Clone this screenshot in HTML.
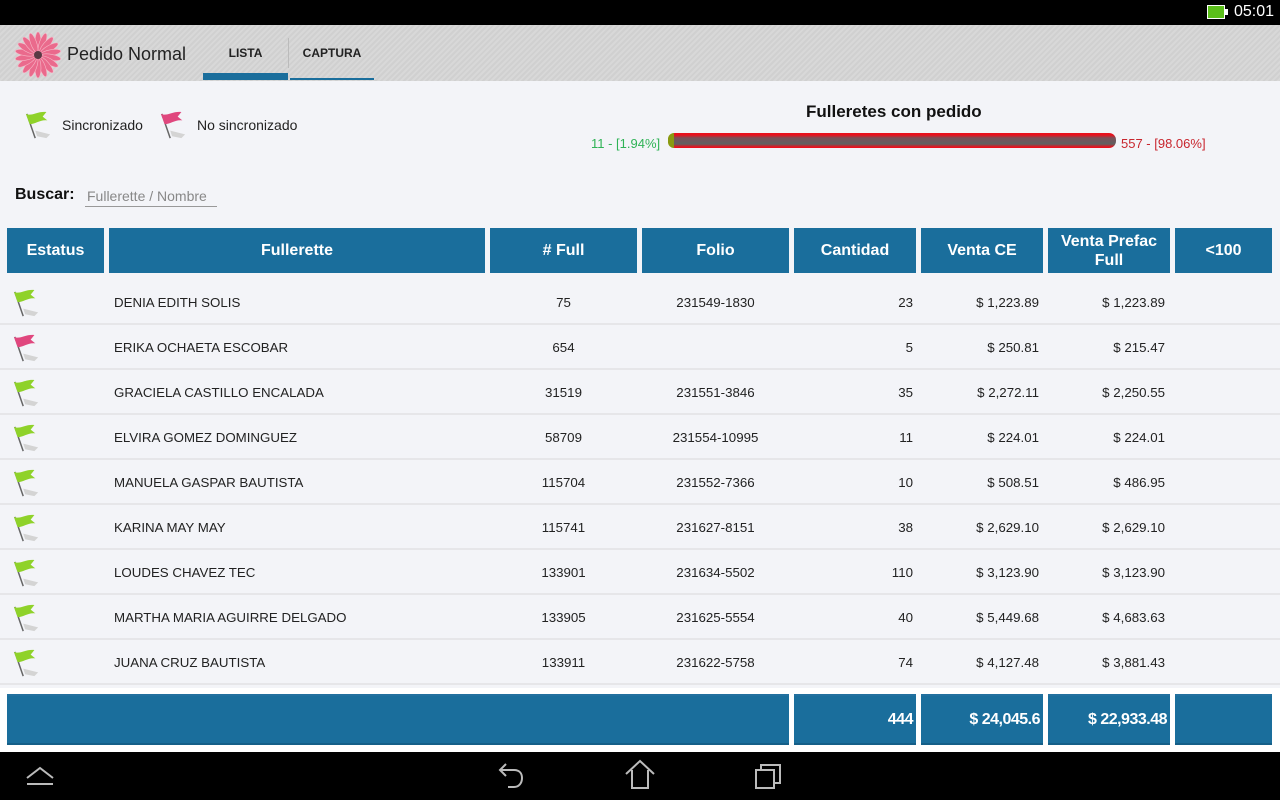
<!DOCTYPE html>
<html><head><meta charset="utf-8"><style>
*{margin:0;padding:0;box-sizing:border-box}
body{width:1280px;height:800px;overflow:hidden;background:#f3f4f8;font-family:"Liberation Sans",sans-serif;position:relative;color:#222}
.a{position:absolute}
#sb{left:0;top:0;width:1280px;height:25px;background:#000}
#ab{left:0;top:25px;width:1280px;height:56px;background:repeating-linear-gradient(135deg,#d0d0d0 0 2px,#d8d8d8 2px 4px)}
.h{position:absolute;top:228px;height:45px;background:#1a6e9c;color:#fff;font-weight:bold;font-size:16px;display:flex;align-items:center;justify-content:center;text-align:center;line-height:19px}
.f{position:absolute;top:694px;height:51px;background:#1a6e9c;color:#fff;font-weight:bold;font-size:16px;letter-spacing:-.5px;display:flex;align-items:center;justify-content:flex-end;padding-right:3px;border-top:2px solid #22709f;border-bottom:2px solid #155f88}
.r{position:absolute;left:0;width:1280px;height:45px;font-size:13.3px;border-bottom:2px solid #e6e6e9}
.r span{position:absolute;top:15px}
.c{text-align:center}.rt{text-align:right}
#nb{left:0;top:752px;width:1280px;height:48px;background:#000}
</style></head><body>
<div id="sb" class="a">
 <div class="a" style="left:1207px;top:5px;width:18px;height:14px;border:1.5px solid #fff;background:#5bbf1a"></div>
 <div class="a" style="left:1225px;top:9px;width:3px;height:6px;background:#fff"></div>
 <div class="a" style="left:1234px;top:3px;color:#fff;font-size:16px">05:01</div>
</div>
<div id="ab" class="a">
 <svg class="a" style="left:14px;top:6px" width="48" height="48" viewBox="-24 -24 48 48">
  <g fill="#ea6a8c" stroke="#f6b8c8" stroke-width=".6">
   <g id="pt"><ellipse cx="0" cy="-13" rx="3" ry="10"/></g>
   <use href="#pt" transform="rotate(20)"/><use href="#pt" transform="rotate(40)"/><use href="#pt" transform="rotate(60)"/><use href="#pt" transform="rotate(80)"/><use href="#pt" transform="rotate(100)"/><use href="#pt" transform="rotate(120)"/><use href="#pt" transform="rotate(140)"/><use href="#pt" transform="rotate(160)"/><use href="#pt" transform="rotate(180)"/><use href="#pt" transform="rotate(200)"/><use href="#pt" transform="rotate(220)"/><use href="#pt" transform="rotate(240)"/><use href="#pt" transform="rotate(260)"/><use href="#pt" transform="rotate(280)"/><use href="#pt" transform="rotate(300)"/><use href="#pt" transform="rotate(320)"/><use href="#pt" transform="rotate(340)"/>
  </g>
  <circle r="4" fill="#5a3a44"/>
 </svg>
 <div class="a" style="left:67px;top:19px;font-size:18px;color:#222">Pedido Normal</div>
 <div class="a" style="left:203px;top:21px;width:85px;text-align:center;font-size:12px;font-weight:bold;color:#222">LISTA</div>
 <div class="a" style="left:203px;top:48px;width:85px;height:7px;background:#1a6e9c"></div>
 <div class="a" style="left:288px;top:13px;width:1px;height:30px;background:#bbb"></div>
 <div class="a" style="left:290px;top:21px;width:84px;text-align:center;font-size:12px;font-weight:bold;color:#222">CAPTURA</div>
 <div class="a" style="left:290px;top:53px;width:84px;height:2px;background:#1a6e9c"></div>
</div>

<svg width="0" height="0" style="position:absolute"><defs>
<symbol id="fg" viewBox="0 0 30 34"><path d="M12 22 L28 26 L24 30 L14 28 Z" fill="#d4d4d4"/><path d="M3 4 L12 30" stroke="#666" stroke-width="1.6"/><path d="M2 4 C9 7 14 1 24 2 L20 7 L25 11 C17 10 13 15 6 15 Z" fill="#8fd22a"/></symbol>
<symbol id="fp" viewBox="0 0 30 34"><path d="M12 22 L28 26 L24 30 L14 28 Z" fill="#d4d4d4"/><path d="M3 4 L12 30" stroke="#666" stroke-width="1.6"/><path d="M2 4 C9 7 14 1 24 2 L20 7 L25 11 C17 10 13 15 6 15 Z" fill="#e0477e"/></symbol>
</defs></svg>

<svg class="a" style="left:24px;top:110px" width="28" height="32"><use href="#fg"/></svg>
<div class="a" style="left:62px;top:117px;font-size:14px">Sincronizado</div>
<svg class="a" style="left:159px;top:110px" width="28" height="32"><use href="#fp"/></svg>
<div class="a" style="left:197px;top:117px;font-size:14px">No sincronizado</div>

<div class="a" style="left:806px;top:102px;font-size:17px;font-weight:bold;color:#111">Fulleretes con pedido</div>
<div class="a" style="left:591px;top:136px;font-size:13px;color:#2fb356">11 - [1.94%]</div>
<div class="a" style="left:668px;top:133px;width:448px;height:15px;border-radius:7px;background:linear-gradient(#e8101c 0,#e8101c 2px,#7a5058 5px,#606060 11px,#e8101c 14px)"></div>
<div class="a" style="left:668px;top:133px;width:6px;height:15px;border-radius:7px 0 0 7px;background:#8a9a10"></div>
<div class="a" style="left:1121px;top:136px;font-size:13px;color:#c8262e">557 - [98.06%]</div>

<div class="a" style="left:15px;top:186px;font-size:16px;font-weight:bold;color:#111">Buscar:</div>
<div class="a" style="left:87px;top:188px;font-size:14px;color:#888">Fullerette / Nombre</div>
<div class="a" style="left:85px;top:206px;width:132px;height:1px;background:#999"></div>

<div class="h" style="left:7px;width:97px">Estatus</div>
<div class="h" style="left:109px;width:376px">Fullerette</div>
<div class="h" style="left:490px;width:147px"># Full</div>
<div class="h" style="left:642px;width:147px">Folio</div>
<div class="h" style="left:794px;width:122px">Cantidad</div>
<div class="h" style="left:921px;width:122px">Venta CE</div>
<div class="h" style="left:1048px;width:122px">Venta Prefac<br>Full</div>
<div class="h" style="left:1175px;width:97px">&lt;100</div>

<div class="r" style="top:280px"><svg class="a" style="left:12px;top:8px" width="28" height="32"><use href="#fg"/></svg><span style="left:114px">DENIA EDITH SOLIS</span><span class="c" style="left:490px;width:147px">75</span><span class="c" style="left:642px;width:147px">231549-1830</span><span class="rt" style="left:794px;width:119px">23</span><span class="rt" style="left:921px;width:118px">$ 1,223.89</span><span class="rt" style="left:1048px;width:117px">$ 1,223.89</span></div>
<div class="r" style="top:325px"><svg class="a" style="left:12px;top:8px" width="28" height="32"><use href="#fp"/></svg><span style="left:114px">ERIKA OCHAETA ESCOBAR</span><span class="c" style="left:490px;width:147px">654</span><span class="c" style="left:642px;width:147px"></span><span class="rt" style="left:794px;width:119px">5</span><span class="rt" style="left:921px;width:118px">$ 250.81</span><span class="rt" style="left:1048px;width:117px">$ 215.47</span></div>
<div class="r" style="top:370px"><svg class="a" style="left:12px;top:8px" width="28" height="32"><use href="#fg"/></svg><span style="left:114px">GRACIELA CASTILLO ENCALADA</span><span class="c" style="left:490px;width:147px">31519</span><span class="c" style="left:642px;width:147px">231551-3846</span><span class="rt" style="left:794px;width:119px">35</span><span class="rt" style="left:921px;width:118px">$ 2,272.11</span><span class="rt" style="left:1048px;width:117px">$ 2,250.55</span></div>
<div class="r" style="top:415px"><svg class="a" style="left:12px;top:8px" width="28" height="32"><use href="#fg"/></svg><span style="left:114px">ELVIRA GOMEZ DOMINGUEZ</span><span class="c" style="left:490px;width:147px">58709</span><span class="c" style="left:642px;width:147px">231554-10995</span><span class="rt" style="left:794px;width:119px">11</span><span class="rt" style="left:921px;width:118px">$ 224.01</span><span class="rt" style="left:1048px;width:117px">$ 224.01</span></div>
<div class="r" style="top:460px"><svg class="a" style="left:12px;top:8px" width="28" height="32"><use href="#fg"/></svg><span style="left:114px">MANUELA GASPAR BAUTISTA</span><span class="c" style="left:490px;width:147px">115704</span><span class="c" style="left:642px;width:147px">231552-7366</span><span class="rt" style="left:794px;width:119px">10</span><span class="rt" style="left:921px;width:118px">$ 508.51</span><span class="rt" style="left:1048px;width:117px">$ 486.95</span></div>
<div class="r" style="top:505px"><svg class="a" style="left:12px;top:8px" width="28" height="32"><use href="#fg"/></svg><span style="left:114px">KARINA MAY MAY</span><span class="c" style="left:490px;width:147px">115741</span><span class="c" style="left:642px;width:147px">231627-8151</span><span class="rt" style="left:794px;width:119px">38</span><span class="rt" style="left:921px;width:118px">$ 2,629.10</span><span class="rt" style="left:1048px;width:117px">$ 2,629.10</span></div>
<div class="r" style="top:550px"><svg class="a" style="left:12px;top:8px" width="28" height="32"><use href="#fg"/></svg><span style="left:114px">LOUDES CHAVEZ TEC</span><span class="c" style="left:490px;width:147px">133901</span><span class="c" style="left:642px;width:147px">231634-5502</span><span class="rt" style="left:794px;width:119px">110</span><span class="rt" style="left:921px;width:118px">$ 3,123.90</span><span class="rt" style="left:1048px;width:117px">$ 3,123.90</span></div>
<div class="r" style="top:595px"><svg class="a" style="left:12px;top:8px" width="28" height="32"><use href="#fg"/></svg><span style="left:114px">MARTHA MARIA AGUIRRE DELGADO</span><span class="c" style="left:490px;width:147px">133905</span><span class="c" style="left:642px;width:147px">231625-5554</span><span class="rt" style="left:794px;width:119px">40</span><span class="rt" style="left:921px;width:118px">$ 5,449.68</span><span class="rt" style="left:1048px;width:117px">$ 4,683.63</span></div>
<div class="r" style="top:640px"><svg class="a" style="left:12px;top:8px" width="28" height="32"><use href="#fg"/></svg><span style="left:114px">JUANA CRUZ BAUTISTA</span><span class="c" style="left:490px;width:147px">133911</span><span class="c" style="left:642px;width:147px">231622-5758</span><span class="rt" style="left:794px;width:119px">74</span><span class="rt" style="left:921px;width:118px">$ 4,127.48</span><span class="rt" style="left:1048px;width:117px">$ 3,881.43</span></div>

<div class="a" style="left:0;top:688px;width:1280px;height:64px;background:#fff"></div>
<div class="f" style="left:7px;width:782px"></div>
<div class="f" style="left:794px;width:122px">444</div>
<div class="f" style="left:921px;width:122px">$ 24,045.6</div>
<div class="f" style="left:1048px;width:122px">$ 22,933.48</div>
<div class="f" style="left:1175px;width:97px"></div>

<div id="nb" class="a">
 <svg class="a" style="left:24px;top:12px" width="32" height="24" fill="none" stroke="#bbb" stroke-width="2"><path d="M3 14 L16 4 L29 14"/><path d="M3 20 L29 20"/></svg>
 <svg class="a" style="left:494px;top:8px" width="36" height="32" fill="none" stroke="#bbb" stroke-width="2"><path d="M12 4 L6 10 L12 16"/><path d="M6 10 H20 C26 10 28 14 28 18 C28 23 25 27 20 27 H14"/></svg>
 <svg class="a" style="left:622px;top:6px" width="36" height="34" fill="none" stroke="#bbb" stroke-width="2"><path d="M4 16 L18 3 L32 16"/><path d="M10 12 V30 H26 V12"/></svg>
 <svg class="a" style="left:750px;top:8px" width="36" height="32" fill="none" stroke="#bbb" stroke-width="2"><rect x="6" y="10" width="18" height="18"/><path d="M11 10 V5 H30 V23 H24"/></svg>
</div>
</body></html>
